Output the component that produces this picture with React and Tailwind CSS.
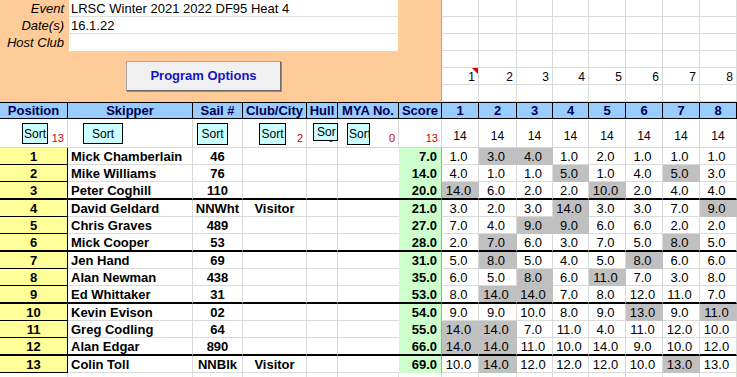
import React from "react";

// column widths, left to right (Position .. race 8)
const W = [
  "w-[68px]",
  "w-[125px]",
  "w-[50px]",
  "w-[64px]",
  "w-[31px]",
  "w-[61px]",
  "w-[43px]",
  "w-[37px]",
  "w-[38px]",
  "w-[36px]",
  "w-[36px]",
  "w-[37px]",
  "w-[37px]",
  "w-[37px]",
  "w-[37px]",
];
const RACE_W = W.slice(7);

const results = [
  { pos: 1, name: "Mick Chamberlain", sail: "46", club: "", score: "7.0", races: [1, 3, 4, 1, 2, 1, 1, 1], drop: [1, 2] },
  { pos: 2, name: "Mike Williams", sail: "76", club: "", score: "14.0", races: [4, 1, 1, 5, 1, 4, 5, 3], drop: [3, 6] },
  { pos: 3, name: "Peter Coghill", sail: "110", club: "", score: "20.0", races: [14, 6, 2, 2, 10, 2, 4, 4], drop: [0, 4] },
  { pos: 4, name: "David Geldard", sail: "NNWht", club: "Visitor", score: "21.0", races: [3, 2, 3, 14, 3, 3, 7, 9], drop: [3, 7] },
  { pos: 5, name: "Chris Graves", sail: "489", club: "", score: "27.0", races: [7, 4, 9, 9, 6, 6, 2, 2], drop: [2, 3] },
  { pos: 6, name: "Mick Cooper", sail: "53", club: "", score: "28.0", races: [2, 7, 6, 3, 7, 5, 8, 5], drop: [1, 6] },
  { pos: 7, name: "Jen Hand", sail: "69", club: "", score: "31.0", races: [5, 8, 5, 4, 5, 8, 6, 6], drop: [1, 5] },
  { pos: 8, name: "Alan Newman", sail: "438", club: "", score: "35.0", races: [6, 5, 8, 6, 11, 7, 3, 8], drop: [2, 4] },
  { pos: 9, name: "Ed Whittaker", sail: "31", club: "", score: "53.0", races: [8, 14, 14, 7, 8, 12, 11, 7], drop: [1, 2] },
  { pos: 10, name: "Kevin Evison", sail: "02", club: "", score: "54.0", races: [9, 9, 10, 8, 9, 13, 9, 11], drop: [5, 7] },
  { pos: 11, name: "Greg Codling", sail: "64", club: "", score: "55.0", races: [14, 14, 7, 11, 4, 11, 12, 10], drop: [0, 1] },
  { pos: 12, name: "Alan Edgar", sail: "890", club: "", score: "66.0", races: [14, 14, 11, 10, 14, 9, 10, 12], drop: [0, 1] },
  { pos: 13, name: "Colin Toll", sail: "NNBlk", club: "Visitor", score: "69.0", races: [10, 14, 12, 12, 12, 10, 13, 13], drop: [1, 6] },
];

const headers = ["Position", "Skipper", "Sail #", "Club/City", "Hull", "MYA No.", "Score", "1", "2", "3", "4", "5", "6", "7", "8"];

function TopArea() {
  return (
    <div className="flex h-[102px]">
      <div className="w-[442px] bg-[#ffcc99] border-r border-r-[#b9a58f] flex flex-col">
        <div className="flex">
          <div className="w-[69px] flex flex-col italic text-[13px]">
            <div className="h-[17px] leading-[18px] text-right pr-[5px]">Event</div>
            <div className="h-[17px] leading-[18px] text-right pr-[5px]">Date(s)</div>
            <div className="h-[17px] leading-[18px] text-right pr-[5px]">Host Club</div>
          </div>
          <div className="w-[329px] bg-white flex flex-col text-[13px]">
            <div className="h-[17px] leading-[17px] border-b border-b-[#dedede] pl-[2px]">
              LRSC Winter 2021 2022 DF95 Heat 4
            </div>
            <div className="h-[17px] leading-[17px] border-b border-b-[#dedede] pl-[2px]">16.1.22</div>
            <div className="h-[17px]"></div>
          </div>
        </div>
        <button className="ml-[126px] mt-[10px] w-[155px] h-[30px] bg-[#f0f0f0] border border-[#a8a8a8] border-r-[#6e6e6e] border-b-[#6e6e6e] shadow-[1px_1px_0_#8a8a8a] text-[13px] font-bold text-[#1414c8]">
          Program Options
        </button>
      </div>
      <div className="flex">
        {RACE_W.map((w, i) => (
          <div key={i} className={`${w} flex flex-col`}>
            {[0, 1, 2, 3, 4, 5].map((r) => (
              <div
                key={r}
                className="relative h-[17px] border-r border-b border-[#dadada] flex items-center justify-end pr-[3px] pt-[1px] text-[12px]"
              >
                {r === 4 && i + 1}
                {r === 4 && i === 0 && (
                  <span className="absolute right-0 top-0 w-0 h-0 border-l-[6px] border-l-transparent border-t-[6px] border-t-[#e00000]" />
                )}
              </div>
            ))}
          </div>
        ))}
      </div>
    </div>
  );
}

function HeaderRow() {
  return (
    <div className="flex h-[17px] bg-[#99ccff] border-t border-b border-black">
      {headers.map((h, i) => (
        <div
          key={h}
          className={`${W[i]} border-r border-r-black flex items-center justify-center text-[13px] font-bold text-[#000050] whitespace-nowrap overflow-hidden`}
        >
          {h}
        </div>
      ))}
    </div>
  );
}

function SortButton({ className, children }) {
  return (
    <div
      className={`absolute top-[4px] bg-[#ccffff] border border-black text-[12px] leading-none flex items-center overflow-hidden whitespace-nowrap ${className}`}
    >
      {children}
    </div>
  );
}

function SortRow() {
  const red = { 0: "13", 3: "2", 4: "0", 5: "0", 6: "13" };
  return (
    <div className="relative flex h-[29px] border-b border-b-[#d6d6d6]">
      {W.map((w, i) => (
        <div
          key={i}
          className={`${w} border-r border-r-[#d6d6d6] flex items-end ${i > 6 ? "justify-center pb-[2px] text-[12px]" : "justify-end pr-[3px] pb-[1px] text-[11px] text-[#cc0000]"}`}
        >
          {i > 6 ? "14" : red[i] || ""}
        </div>
      ))}
      <SortButton className="left-[22px] w-[26px] h-[21px] justify-center">Sort</SortButton>
      <SortButton className="left-[83px] w-[40px] h-[21px] justify-center">Sort</SortButton>
      <SortButton className="left-[197px] w-[31px] h-[22px] justify-center">Sort</SortButton>
      <SortButton className="left-[259px] w-[27px] h-[22px] justify-center">Sort</SortButton>
      <SortButton className="left-[313px] w-[25px] h-[18px] pl-[3px]">Sor</SortButton>
      <SortButton className="left-[347px] w-[23px] h-[22px] pl-[1px]">Sort</SortButton>
    </div>
  );
}

function ResultRow({ r, thick }) {
  const rowH = thick ? "h-[18px] border-b-2 border-b-black" : "h-[17px] border-b";
  const grid = thick ? "" : "border-b-[#dadada]";
  return (
    <div className="flex text-[13px] leading-none">
      <div className={`${W[0]} ${rowH} ${thick ? "" : "border-b-black"} bg-[#ffff99] border-r border-r-black flex items-center justify-center font-bold`}>
        {r.pos}
      </div>
      <div className={`${W[1]} ${rowH} ${grid} border-r border-r-[#dadada] flex items-center pl-[3px] font-bold whitespace-nowrap`}>
        {r.name}
      </div>
      <div className={`${W[2]} ${rowH} ${grid} border-r border-r-[#dadada] flex items-center justify-center font-bold`}>
        {r.sail}
      </div>
      <div className={`${W[3]} ${rowH} ${grid} border-r border-r-[#dadada] flex items-center justify-center font-bold`}>
        {r.club}
      </div>
      <div className={`${W[4]} ${rowH} ${grid} border-r border-r-[#dadada]`}></div>
      <div className={`${W[5]} ${rowH} ${grid}`}></div>
      <div className={`${W[6]} ${rowH} ${thick ? "" : "border-b-[#ccffcc]"} bg-[#ccffcc] border-r border-r-[#a6a6a6] flex items-center justify-end pr-[4px] font-bold`}>
        {r.score}
      </div>
      {r.races.map((v, i) => {
        const dropped = r.drop.includes(i);
        return (
          <div
            key={i}
            className={`${RACE_W[i]} ${rowH} ${dropped ? "bg-[#c0c0c0] border-r border-r-[#c0c0c0]" : "border-r border-r-[#dadada]"} ${thick ? "" : dropped ? "border-b-[#c0c0c0]" : "border-b-[#dadada]"} flex items-center justify-center pr-[3px]`}
          >
            {v.toFixed(1)}
          </div>
        );
      })}
    </div>
  );
}

function BlankRow() {
  return (
    <div className="flex h-[17px]">
      {W.map((w, i) => (
        <div key={i} className={`${w} h-[17px] border-r border-b border-[#dadada]`}></div>
      ))}
    </div>
  );
}

export default function App() {
  return (
    <div className="w-[737px] h-[377px] overflow-hidden bg-white text-black font-['Liberation_Sans',Arial,sans-serif]">
      <TopArea />
      <HeaderRow />
      <SortRow />
      {results.map((r) => (
        <ResultRow key={r.pos} r={r} thick={r.pos % 3 === 0} />
      ))}
      <BlankRow />
    </div>
  );
}
